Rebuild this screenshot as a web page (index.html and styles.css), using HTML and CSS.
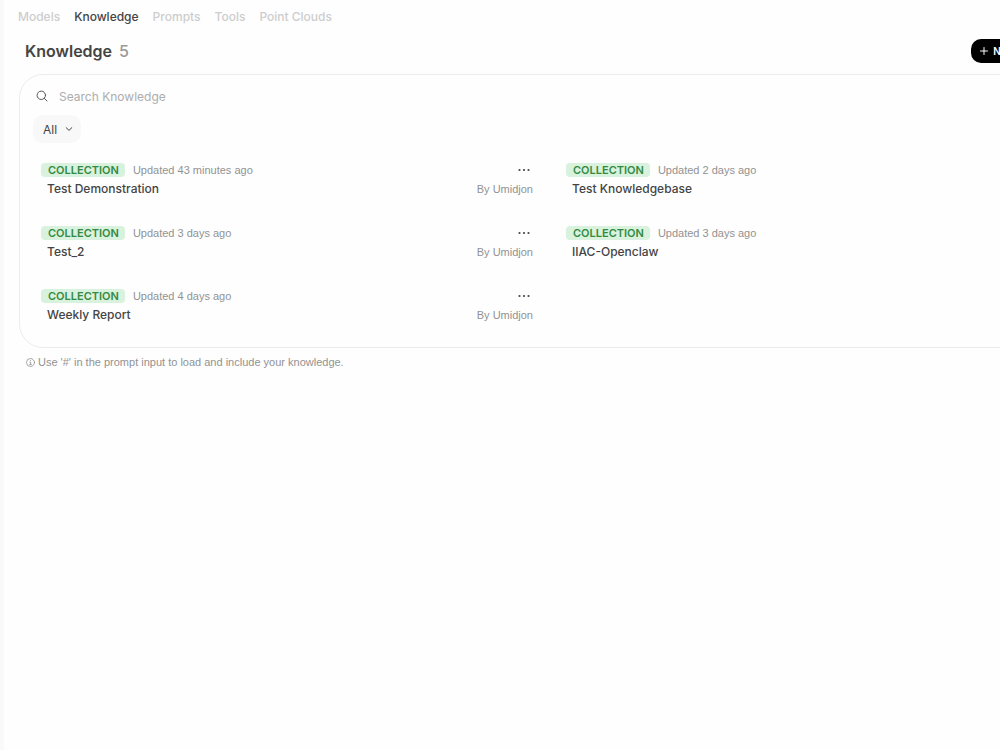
FILE: index.html
```html
<!DOCTYPE html>
<html lang="en">

<head>
    <meta charset="UTF-8">
    <meta name="viewport" content="width=device-width, initial-scale=1.0">
    <title>Knowledge</title>

    <link rel="stylesheet" href="styles.css">
</head>

<body>
    <div class="workspace">
        <nav class="tabs">
            <a href="#models">Models</a>
            <a href="#knowledge" class="active">Knowledge</a>
            <a href="#prompts">Prompts</a>
            <a href="#tools">Tools</a>
            <a href="#point-clouds">Point Clouds</a>
        </nav>

        <main>
            <div class="title-row">
                <h1>Knowledge</h1>
                <span class="count">5</span>
                <button type="button" class="new-btn">
                    <svg width="10" height="10" viewBox="0 0 10 10"><path d="M5 1.5v7M1.5 5h7"/></svg>
                    New Knowledge
                </button>
            </div>

            <section class="panel">
                <label class="search">
                    <svg width="12" height="12" viewBox="0 0 12 12"><circle cx="5.3" cy="5.3" r="4.2"/><path d="M8.4 8.4 11 11"/></svg>
                    <input type="text" placeholder="Search Knowledge" aria-label="Search Knowledge">
                </label>

                <div class="filters">
                    <button type="button" class="filter-btn">
                        All
                        <svg width="8" height="8" viewBox="0 0 8 8"><path d="M1.2 2.7 4 5.4l2.8-2.7"/></svg>
                    </button>
                </div>

                <div class="items" id="items"></div>
            </section>

            <p class="hint">
                <svg width="9" height="9" viewBox="0 0 9 9"><circle cx="4.5" cy="4.5" r="4"/><path d="M4.5 2.3v.2M3.9 4h.7v2.5M3.7 6.6h1.7"/></svg>
                Use '#' in the prompt input to load and include your knowledge.
            </p>
        </main>
    </div>

    <script>

const collections = [
    { name: "Test Demonstration", updated: "43 minutes ago" },
    { name: "Test Knowledgebase", updated: "2 days ago" },
    { name: "Test_2", updated: "3 days ago" },
    { name: "IIAC-Openclaw", updated: "3 days ago" },
    { name: "Weekly Report", updated: "4 days ago" },
];

// Show the collections in the grid
document.getElementById('items').innerHTML = collections.map(item => `
    <article class="item">
        <div class="item-row">
            <span class="badge">COLLECTION</span>
            <span class="updated">Updated ${item.updated}</span>
            <button type="button" class="more" aria-label="More options">
                <svg width="14" height="4" viewBox="0 0 14 4"><circle cx="2.5" cy="2" r="1.1"/><circle cx="7" cy="2" r="1.1"/><circle cx="11.5" cy="2" r="1.1"/></svg>
            </button>
        </div>
        <div class="item-row">
            <h2>${item.name}</h2>
            <span class="author">By Umidjon</span>
        </div>
    </article>`).join('');

    </script>
</body>

</html>
```

FILE: styles.css
```css
* {
    margin: 0;
    padding: 0;
    box-sizing: border-box;
}

body {
    min-height: 100vh;
    overflow: hidden;
    background-color: #fefefe;
    border-left: 4px solid #f9f9f9;
    font-family: Inter, "Liberation Sans", sans-serif;
    color: #444;
}

button, input {
    border: none;
    outline: none;
    background: none;
    font-family: inherit;
    color: inherit;
}

svg {
    fill: none;
    stroke: currentColor;
    stroke-linecap: round;
    stroke-linejoin: round;
    flex-shrink: 0;
}

.workspace {
    min-width: 1091px;
    padding: 7px 15px;
}

.tabs {
    display: flex;
    gap: 14px;
    font-size: 12px;
    line-height: 20px;
    font-weight: 500;
    margin-left: -1px;
}

.tabs a {
    color: #cdcdcd;
    text-decoration: none;
}

.tabs .active {
    color: #444;
}

.title-row {
    display: flex;
    align-items: center;
    height: 24px;
    margin: 12px 0 11px;
    padding-left: 6px;
}

h1 {
    font-size: 16px;
    line-height: 24px;
    font-weight: 600;
}

.count {
    margin-left: 7px;
    font-size: 16px;
    line-height: 24px;
    font-weight: 500;
    color: #999;
}

.new-btn {
    display: flex;
    align-items: center;
    gap: 4px;
    height: 24px;
    margin-left: auto;
    padding: 0 8px;
    border-radius: 10px;
    background-color: #000;
    color: #fff;
    font-size: 10px;
    font-weight: 600;
}

.panel {
    padding: 8px 13px 15px;
    border: 1px solid #ececec;
    border-radius: 24px;
}

.search {
    display: flex;
    align-items: center;
    gap: 11px;
    height: 26px;
    padding-left: 3px;
}

.search svg {
    color: #555;
}

.search input {
    flex: 1;
    font-size: 12px;
}

.search input::placeholder {
    color: #adadad;
}

.filter-btn {
    display: flex;
    align-items: center;
    gap: 8px;
    height: 28px;
    margin-top: 6px;
    padding: 0 8px 0 10px;
    border-radius: 10px;
    background-color: #f8f8f8;
    font-size: 12px;
}

.items {
    display: grid;
    grid-template-columns: 1fr 1fr;
    gap: 9px 17px;
    margin-top: 9px;
}

.item {
    padding: 8px;
    height: 54px;
}

.item-row {
    display: flex;
    align-items: center;
    height: 19px;
}

.badge {
    padding: 0 6px 0 7px;
    border-radius: 4px;
    background-color: #d9f2dd;
    color: #348a43;
    font-size: 11px;
    line-height: 14px;
    font-weight: 600;
}

.updated, .author, .hint {
    font-family: "Liberation Sans", Arial, sans-serif;
    font-size: 11px;
    line-height: 16px;
    color: #929292;
}

.updated {
    margin-left: 8px;
}

.more {
    display: flex;
    margin-left: auto;
    padding: 4px 2px;
}

.more svg {
    fill: currentColor;
    stroke: none;
}

h2 {
    padding-left: 6px;
    font-size: 12px;
    font-weight: 500;
}

.author {
    margin-left: auto;
}

.hint {
    display: flex;
    align-items: center;
    gap: 3px;
    margin-top: 6px;
    padding-left: 7px;
}

.hint svg {
    stroke-width: 0.8;
}
```
